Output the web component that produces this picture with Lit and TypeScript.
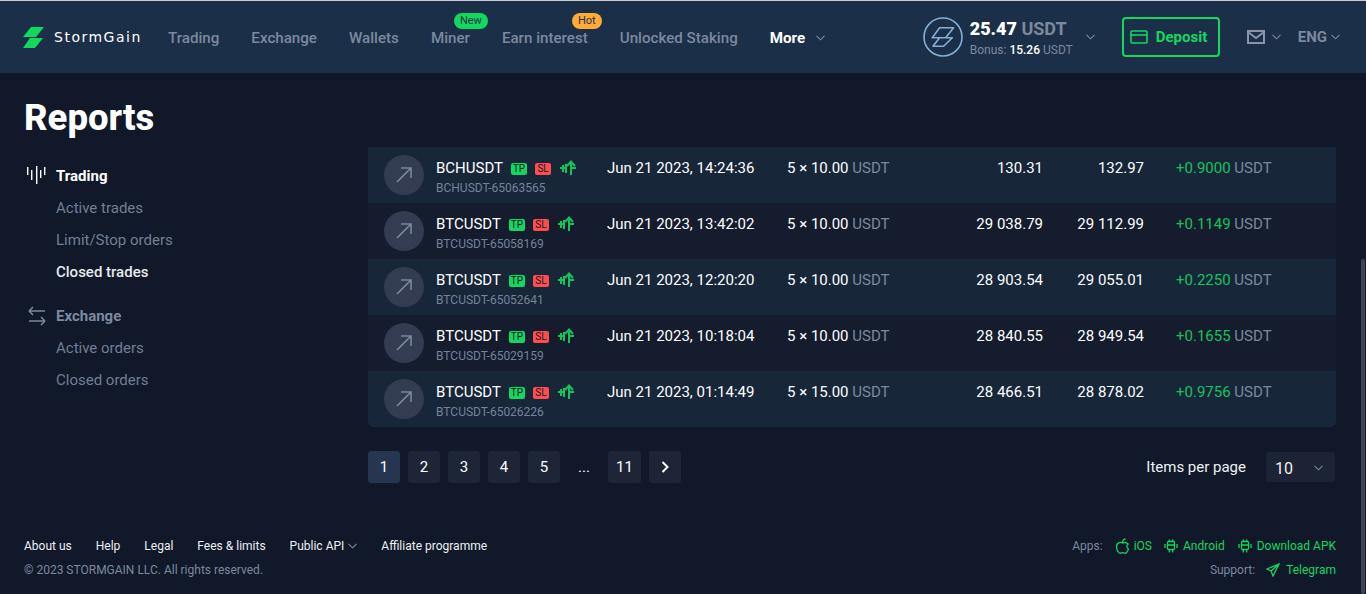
import { css, html, LitElement } from "lit";
import { customElement } from "lit/decorators.js";

const chev = html`<svg class="chev" width="9" height="6" viewBox="0 0 9 6">
  <path d="M.5.8l4 4 4-4" fill="none" stroke="currentColor" stroke-width="1.1" />
</svg>`;

const android = html`<svg width="16" height="16" viewBox="0 0 16 16" fill="none" stroke="currentColor" stroke-width="1.3">
  <rect x="4.5" y="3.5" width="7" height="8" rx="1.2" /><path d="M4.5 7h7M6 1.5l.8 2M10 1.5l-.8 2M6.300 11.500v3M9.700 11.500v3M2 6v4M14 6v4" />
</svg>`;

const rows = [
  ["BCHUSDT", "65063565", "Jun 21 2023, 14:24:36", "5 × 10.00", "130.31", "132.97", "+0.9000"],
  ["BTCUSDT", "65058169", "Jun 21 2023, 13:42:02", "5 × 10.00", "29 038.79", "29 112.99", "+0.1149"],
  ["BTCUSDT", "65052641", "Jun 21 2023, 12:20:20", "5 × 10.00", "28 903.54", "29 055.01", "+0.2250"],
  ["BTCUSDT", "65029159", "Jun 21 2023, 10:18:04", "5 × 10.00", "28 840.55", "28 949.54", "+0.1655"],
  ["BTCUSDT", "65026226", "Jun 21 2023, 01:14:49", "5 × 15.00", "28 466.51", "28 878.02", "+0.9756"],
];

@customElement("app-root")
export class AppRoot extends LitElement {
  static styles = css`
    :host {
      display: flex;
      flex-direction: column;
      position: relative;
      height: 594px;
      overflow: hidden;
      background: #10182a;
      color: #fff;
      font-family: Roboto, "Liberation Sans", sans-serif;
      font-size: 14px;
    }
    svg { display: block; flex: none; }

    .topline { height: 1px; background: #c9ccd0; flex: none; }
    header {
      display: flex;
      align-items: center;
      height: 72px;
      flex: none;
      background: #1b3048;
      padding-left: 23px;
      color: #7c889f;
    }
    .logo { display: flex; align-items: center; gap: 10px; width: 145px; color: #fff; }
    .logo-text { font-family: "DejaVu Sans", sans-serif; font-size: 14px; letter-spacing: 1.5px; line-height: 16px; }
    nav { display: flex; align-items: center; gap: 32px; font-size: 15.15px; font-weight: 500; padding-top: 2px; }
    nav a { position: relative; white-space: nowrap; }
    nav .more { color: #fff; font-weight: 700; display: flex; align-items: center; gap: 11px; }
    .chev { color: #7c889f; }
    .tag {
      position: absolute;
      top: -16px;
      height: 16px;
      border-radius: 8px;
      font-size: 11px;
      font-weight: 400;
      line-height: 16px;
      padding: 0 6px;
      color: #1b3048;
    }
    .tag.new { background: #12d85e; left: 23px; }
    .tag.hot { background: #ffab36; left: 70px; }

    .account { margin-left: auto; display: flex; align-items: center; }
    .balance { margin-left: 7px; width: 116px; padding-top: 2px; }
    .bal-main { font-size: 18px; line-height: 22px; font-weight: 700; color: #7c889f; }
    .bal-main b { color: #fff; }
    .bal-sub { font-size: 12px; line-height: 16px; margin-top: 2px; }
    .bal-sub b { color: #fff; font-weight: 500; }
    .deposit {
      display: flex;
      align-items: center;
      gap: 8px;
      box-sizing: border-box;
      width: 98px;
      height: 40px;
      margin-left: 27px;
      padding-left: 6px;
      border: 2px solid #12d85e;
      border-radius: 4px;
      color: #12d85e;
      font-size: 15px;
      font-weight: 700;
    }
    .mail { margin-left: 27px; display: flex; align-items: center; gap: 7px; }
    .lang { margin-left: 17px; margin-right: 26px; display: flex; align-items: center; gap: 4px; font-size: 15px; font-weight: 700; }

    main { display: flex; flex: none; height: 447px; }
    aside { width: 368px; flex: none; padding-left: 24px; box-sizing: border-box; }
    h1 { margin: 23px 0 0; font-size: 36.5px; line-height: 44px; font-weight: 800; height: 44px; }
    .side { margin-top: 20px; color: #7c889f; }
    .group { display: flex; align-items: center; gap: 8px; height: 32px; font-weight: 700; color: #7c889f; padding-left: 2px; }
    .group.on { color: #fff; }
    .group span { font-size: 15px; }
    .link { height: 32px; line-height: 32px; padding-left: 32px; font-size: 15px; color: #737e94; }
    .link.on { color: #e8eaee; font-weight: 500; }
    .sep { height: 12px; }

    .content { flex: none; width: 968px; padding-top: 74px; }
    .row {
      display: grid;
      grid-template-columns: 40px 183px 180px 76px 180px 101px auto;
      height: 56px;
      padding-left: 16px;
      box-sizing: border-box;
      background: #141c2e;
      font-size: 15px;
    }
    .row:nth-child(odd) { background: #18263a; }
    .row:last-child { border-radius: 0 0 6px 6px; }
    .row > div { padding-top: 13px; line-height: 17px; white-space: nowrap; }
    .muted { color: #7c889f; }
    .row > .circle {
      width: 40px;
      height: 40px;
      margin-top: 8px;
      padding: 0;
      border-radius: 50%;
      background: #333c50;
      display: flex;
      align-items: center;
      justify-content: center;
      color: #7c889f;
    }
    .sym { display: flex; align-items: center; margin-left: 12px; }
    .sym-name { margin-right: 8px; }
    .badge {
      width: 16px;
      height: 12px;
      border-radius: 2px;
      font-size: 10px;
      line-height: 12px;
      text-align: center;
      color: #10182a;
      margin-right: 8px;
    }
    .tp { background: #12d85e; }
    .sl { background: #ff4d4f; }
    .tree { margin-left: 1px; margin-top: -2px; }
    .tid { margin-left: 12px; margin-top: 3px; font-size: 12px; line-height: 16px; color: #76839c; }
    .num { text-align: right; }
    .profit { padding-left: 32px; }
    .profit b { color: #12c45a; font-weight: 400; }

    .pager-bar { display: flex; align-items: center; justify-content: space-between; margin-top: 24px; height: 32px; }
    .pager { display: flex; gap: 8px; }
    .pg {
      min-width: 32px;
      height: 32px;
      border-radius: 3px;
      background: #1e2536;
      display: flex;
      align-items: center;
      justify-content: center;
      font-size: 15px;
    }
    .pg.cur { background: #263650; }
    .pg.dots { background: none; width: 32px; }
    .pg.wide { min-width: 33px; }
    .per { display: flex; align-items: center; gap: 20px; font-size: 15px; color: #eef0f3; margin-right: 1px; }
    .select {
      width: 69px;
      height: 30px;
      background: #1c2335;
      border-radius: 3px;
      display: flex;
      align-items: center;
      justify-content: space-between;
      box-sizing: border-box;
      padding: 2px 12px 0 9px;
      font-size: 16px;
    }

    footer { display: flex; justify-content: space-between; padding: 14px 30px 0 24px; font-size: 12px; flex: 1; }
    .f-links { display: flex; gap: 24px; height: 24px; align-items: center; color: #eef0f3; }
    .f-links a { display: flex; align-items: center; gap: 4px; }
    .copy { height: 24px; line-height: 24px; color: #7c889f; }
    .f-right { display: flex; flex-direction: column; align-items: flex-end; }
    .f-row { display: flex; align-items: center; height: 24px; color: #7c889f; }
    .f-row a { display: flex; align-items: center; gap: 4px; color: #12d85e; margin-left: 12px; }
    .f-row a.droid { margin-left: 11px; }
    .f-row a.tg { margin-left: 11px; gap: 6px; }

    .scrollbar {
      position: absolute;
      right: 1px;
      top: 259px;
      bottom: 0;
      width: 4px;
      border-radius: 2px;
      background: #3d4556;
    }
  `;

  render() {
    return html`
      <div class="topline"></div>
      <header>
        <div class="logo">
          <svg width="21" height="21" viewBox="0 0 21 21" fill="#12d85e">
            <path d="M8 0h13l-8 10H0zM7 11h13l-8 10H0z" />
          </svg>
          <span class="logo-text">StormGain</span>
        </div>
        <nav>
          <a>Trading</a>
          <a>Exchange</a>
          <a>Wallets</a>
          <a>Miner<span class="tag new">New</span></a>
          <a>Earn interest<span class="tag hot">Hot</span></a>
          <a>Unlocked Staking</a>
          <a class="more">More ${chev}</a>
        </nav>
        <div class="account">
          <svg width="40" height="40" viewBox="0 0 40 40" fill="none" stroke="#85aed6" stroke-width="1.6">
            <circle cx="20" cy="20" r="19" />
            <path d="M16.600 10.700h14l-8 10H9.300zM16.600 20.700h12.700l-8.700 8.600H10z" stroke-linejoin="round" />
          </svg>
          <div class="balance">
            <div class="bal-main"><b>25.47</b> USDT</div>
            <div class="bal-sub">Bonus: <b>15.26</b> USDT</div>
          </div>
          ${chev}
          <div class="deposit">
            <svg width="18" height="14" viewBox="0 0 18 14" fill="none" stroke="currentColor" stroke-width="1.6">
              <rect x="1" y="1" width="16" height="12" rx="1" /><path d="M1 5h16" />
            </svg>
            <span>Deposit</span>
          </div>
          <div class="mail">
            <svg width="18" height="14" viewBox="0 0 18 14" fill="none" stroke="#8a94a8" stroke-width="2">
              <rect x="1" y="1" width="16" height="12" /><path d="M1 2l8 6 8-6" />
            </svg>
            ${chev}
          </div>
          <div class="lang">ENG ${chev}</div>
        </div>
      </header>
      <main>
        <aside>
          <h1>Reports</h1>
          <div class="side">
            <div class="group on">
              <svg width="22" height="20" viewBox="0 0 22 20" fill="none" stroke="#fff" stroke-width="1.4">
                <path d="M1.700 1v8M5.700 4v10M10.700 0v18M14.700 4v8M18.700 1v8" />
              </svg>
              <span>Trading</span>
            </div>
            <div class="link">Active trades</div>
            <div class="link">Limit/Stop orders</div>
            <div class="link on">Closed trades</div>
            <div class="sep"></div>
            <div class="group">
              <svg width="22" height="20" viewBox="0 0 22 20" fill="none" stroke="#7c889f" stroke-width="1.5">
                <path d="M3 5h16M3 5l4-4M3 5l4 4M19 15H3M19 15l-4-4M19 15l-4 4" />
              </svg>
              <span>Exchange</span>
            </div>
            <div class="link">Active orders</div>
            <div class="link">Closed orders</div>
          </div>
        </aside>
        <div class="content">
          <div class="rows">
            ${rows.map(
              (r) => html`<div class="row">
                <div class="circle">
                  <svg width="16" height="16" viewBox="0 0 16 16" fill="none" stroke="currentColor" stroke-width="1.6">
                    <path d="M1 15L15 1M5 1h10v10" />
                  </svg>
                </div>
                <div>
                  <div class="sym">
                    <span class="sym-name">${r[0]}</span>
                    <span class="badge tp">TP</span>
                    <span class="badge sl">SL</span>
                    <svg class="tree" width="17" height="16" viewBox="0 0 17 16" fill="none" stroke="#12c45a" stroke-width="2">
                      <path d="M11 15V2M7 6l4-4.500L15 6M0 8h6M3 5v7M6 4v9M11 8h5" />
                    </svg>
                  </div>
                  <div class="tid">${r[0]}-${r[1]}</div>
                </div>
                <div>${r[2]}</div>
                <div>${r[3]} <span class="muted">USDT</span></div>
                <div class="num">${r[4]}</div>
                <div class="num">${r[5]}</div>
                <div class="profit"><b>${r[6]}</b> <span class="muted">USDT</span></div>
              </div>`
            )}
          </div>
          <div class="pager-bar">
            <div class="pager">
              <div class="pg cur">1</div>
              <div class="pg">2</div>
              <div class="pg">3</div>
              <div class="pg">4</div>
              <div class="pg">5</div>
              <div class="pg dots">...</div>
              <div class="pg wide">11</div>
              <div class="pg">
                <svg width="8" height="12" viewBox="0 0 8 12" fill="none" stroke="#fff" stroke-width="2">
                  <path d="M1.500 1l5 5-5 5" />
                </svg>
              </div>
            </div>
            <div class="per">
              <span>Items per page</span>
              <div class="select"><span>10</span>${chev}</div>
            </div>
          </div>
        </div>
      </main>
      <footer>
        <div>
          <div class="f-links">
            <a>About us</a><a>Help</a><a>Legal</a><a>Fees &amp; limits</a>
            <a>Public API ${chev}</a>
            <a>Affiliate programme</a>
          </div>
          <div class="copy">© 2023 STORMGAIN LLC. All rights reserved.</div>
        </div>
        <div class="f-right">
          <div class="f-row">
            <span>Apps:</span>
            <a><svg width="15" height="16" viewBox="0 0 15 16" fill="none" stroke="currentColor" stroke-width="1.3">
              <path d="M7.500 5C5.500 3.800 1.500 4.500 1.500 9c0 3.500 2.500 6.300 3.500 6.300s1.700-.6 2.500-.6 1.500.6 2.500.6 2.700-2 3.500-4.300C11.700 10 11.200 7 13.200 6 12 4.300 9 4.200 7.500 5zM7.500 4.500C7.500 2.500 9 1 10.500 1" />
            </svg>iOS</a>
            <a class="droid">${android}Android</a>
            <a>${android}Download APK</a>
          </div>
          <div class="f-row">
            <span>Support:</span>
            <a class="tg"><svg width="14" height="14" viewBox="0 0 14 14" fill="none" stroke="currentColor" stroke-width="1.3">
              <path d="M13 1L1 6l4 2 2 5zM13 1L5 8" />
            </svg>Telegram</a>
          </div>
        </div>
      </footer>
      <div class="scrollbar"></div>
    `;
  }
}
